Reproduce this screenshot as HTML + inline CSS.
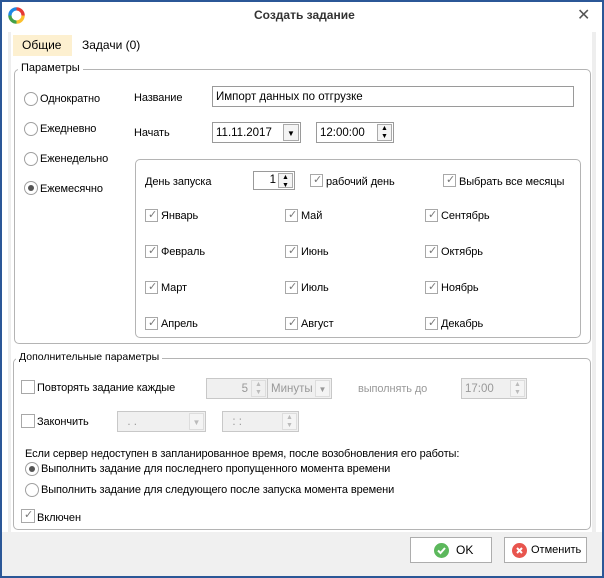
<!DOCTYPE html>
<html><head><meta charset="utf-8"><style>
*{margin:0;padding:0;box-sizing:border-box}
body{width:604px;height:578px;overflow:hidden;background:#2b5797;font-family:"Liberation Sans","DejaVu Sans",sans-serif;font-size:11px;color:#000}
#w{position:absolute;left:2px;top:2px;width:600px;height:574px;background:#fff}
.a{position:absolute;white-space:nowrap}
.t{margin-top:0;letter-spacing:-0.1px}
.grp{position:absolute;border:1px solid #b4b4b4;border-radius:5px}
.lg{position:absolute;background:#fff;padding:0 3px;white-space:nowrap;font-size:11px}
.rb{position:absolute;width:14px;height:14px;border:1px solid #a0a0a0;border-radius:50%;background:#fff}
.rb.on::after{content:"";position:absolute;left:3px;top:3px;width:6px;height:6px;border-radius:50%;background:#555}
.cb{position:absolute;width:13px;height:13px;border:1px solid #a8a8a8;background:#fff}
.cb.on::after{content:"✓";position:absolute;left:2px;top:-2px;font-size:11px;color:#777}
.in{position:absolute;border:1px solid #9a9a9a;background:#fff;padding-left:3px;line-height:20px;font-size:11.5px}
.dis{border-color:#c8c8c8;background:#f0f0f0;color:#999}
.sp{position:absolute;right:1px;top:1px;bottom:1px;width:15px;border:1px solid #aaa;background:#f4f4f4}
.btn{position:absolute;border:1px solid #adadad;background:#fff;height:26px}
</style></head><body><div id="w">
<svg class="a" style="left:6px;top:5px" width="17" height="17" viewBox="0 0 18 18"><path d="M9 2A7 7 0 0 1 16 9" stroke="#e53935" stroke-width="3.5" fill="none"/><path d="M16 9A7 7 0 0 1 9 16" stroke="#fbc02d" stroke-width="3.5" fill="none"/><path d="M9 16A7 7 0 0 1 2 9" stroke="#43a047" stroke-width="3.5" fill="none"/><path d="M2 9A7 7 0 0 1 9 2" stroke="#1e88e5" stroke-width="3.5" fill="none"/></svg>
<div class="a" style="left:252px;top:6px;font-weight:bold;color:#333;font-size:12px">Создать задание</div>
<div class="a" style="left:575px;top:3px;font-size:16px;color:#555">✕</div>
<div class="a" style="left:6px;top:30px;width:3px;height:500px;background:#eee"></div>
<div class="a" style="left:590px;top:30px;width:4px;height:500px;background:#eee"></div>
<div class="a" style="left:11px;top:33px;width:59px;height:21px;background:#fdf0d0"></div>
<div class="a" style="left:20px;top:36px;font-size:12px">Общие</div>
<div class="a" style="left:80px;top:36px;font-size:12px">Задачи (0)</div>

<div class="grp" style="left:12px;top:67px;width:577px;height:275px"></div>
<div class="lg" style="left:16px;top:60px">Параметры</div>
<div class="rb" style="left:22px;top:90px"></div><div class="a t" style="left:38px;top:91px">Однократно</div>
<div class="rb" style="left:22px;top:120px"></div><div class="a t" style="left:38px;top:121px">Ежедневно</div>
<div class="rb" style="left:22px;top:150px"></div><div class="a t" style="left:38px;top:151px">Еженедельно</div>
<div class="rb on" style="left:22px;top:179px"></div><div class="a t" style="left:38px;top:181px">Ежемесячно</div>
<div class="a t" style="left:132px;top:90px">Название</div>
<div class="in" style="left:210px;top:84px;width:362px;height:21px">Импорт данных по отгрузке</div>
<div class="a t" style="left:132px;top:125px">Начать</div>
<div class="in" style="left:210px;top:120px;width:89px;height:21px">11.11.2017<div class="sp" style="width:16px;font-size:8px;text-align:center;line-height:17px">▼</div></div>
<div class="in" style="left:314px;top:120px;width:78px;height:21px">12:00:00<div class="sp" style="font-size:7px;text-align:center;line-height:8px">▲<br>▼</div></div>
<div class="grp" style="left:133px;top:157px;width:446px;height:179px"></div>
<div class="a t" style="left:143px;top:174px">День запуска</div>
<div class="in" style="left:251px;top:169px;width:42px;height:19px;text-align:right;padding-right:18px;line-height:17px">1<div class="sp" style="font-size:7px;text-align:center;line-height:8px">▲<br>▼</div></div>
<div class="cb on" style="left:308px;top:172px"></div><div class="a t" style="left:324px;top:174px">рабочий день</div>
<div class="cb on" style="left:441px;top:172px"></div><div class="a t" style="left:457px;top:174px">Выбрать все месяцы</div>

<div class="cb on" style="left:143px;top:207px"></div><div class="a t" style="left:159px;top:208px">Январь</div>
<div class="cb on" style="left:143px;top:243px"></div><div class="a t" style="left:159px;top:244px">Февраль</div>
<div class="cb on" style="left:143px;top:279px"></div><div class="a t" style="left:159px;top:280px">Март</div>
<div class="cb on" style="left:143px;top:315px"></div><div class="a t" style="left:159px;top:316px">Апрель</div>
<div class="cb on" style="left:283px;top:207px"></div><div class="a t" style="left:299px;top:208px">Май</div>
<div class="cb on" style="left:283px;top:243px"></div><div class="a t" style="left:299px;top:244px">Июнь</div>
<div class="cb on" style="left:283px;top:279px"></div><div class="a t" style="left:299px;top:280px">Июль</div>
<div class="cb on" style="left:283px;top:315px"></div><div class="a t" style="left:299px;top:316px">Август</div>
<div class="cb on" style="left:423px;top:207px"></div><div class="a t" style="left:439px;top:208px">Сентябрь</div>
<div class="cb on" style="left:423px;top:243px"></div><div class="a t" style="left:439px;top:244px">Октябрь</div>
<div class="cb on" style="left:423px;top:279px"></div><div class="a t" style="left:439px;top:280px">Ноябрь</div>
<div class="cb on" style="left:423px;top:315px"></div><div class="a t" style="left:439px;top:316px">Декабрь</div>

<div class="grp" style="left:11px;top:356px;width:578px;height:172px"></div>
<div class="lg" style="left:14px;top:349px;font-size:10.5px">Дополнительные параметры</div>
<div class="cb" style="left:19px;top:378px;width:14px;height:14px"></div><div class="a t" style="left:35px;top:380px">Повторять задание каждые</div>
<div class="in dis" style="left:204px;top:376px;width:62px;height:21px;text-align:right;padding-right:19px">5<div class="sp" style="border-color:#ddd;background:#f0f0f0;font-size:7px;text-align:center;line-height:8px;color:#bbb">▲<br>▼</div></div>
<div class="in dis" style="left:265px;top:376px;width:65px;height:21px">Минуты<div class="sp" style="border-color:#ddd;font-size:8px;text-align:center;line-height:17px;color:#999">▼</div></div>
<div class="a t" style="left:356px;top:381px;color:#999">выполнять до</div>
<div class="in dis" style="left:459px;top:376px;width:66px;height:21px">17:00<div class="sp" style="border-color:#ddd;font-size:7px;text-align:center;line-height:8px;color:#bbb">▲<br>▼</div></div>
<div class="cb" style="left:19px;top:412px;width:14px;height:14px"></div><div class="a t" style="left:35px;top:414px">Закончить</div>
<div class="in dis" style="left:115px;top:409px;width:89px;height:21px">&nbsp;&nbsp;. .<div class="sp" style="border-color:#ddd;font-size:8px;text-align:center;line-height:17px;color:#bbb">▼</div></div>
<div class="in dis" style="left:220px;top:409px;width:77px;height:21px">&nbsp;&nbsp;: :<div class="sp" style="border-color:#ddd;font-size:7px;text-align:center;line-height:8px;color:#bbb">▲<br>▼</div></div>
<div class="a t" style="left:23px;top:446px">Если сервер недоступен в запланированное время, после возобновления его работы:</div>
<div class="rb on" style="left:23px;top:460px"></div><div class="a t" style="left:39px;top:461px">Выполнить задание для последнего пропущенного момента времени</div>
<div class="rb" style="left:23px;top:481px"></div><div class="a t" style="left:39px;top:482px">Выполнить задание для следующего после запуска момента времени</div>
<div class="cb on" style="left:19px;top:507px;width:14px;height:14px"></div><div class="a t" style="left:35px;top:510px">Включен</div>

<div class="a" style="left:0;top:530px;width:600px;height:44px;background:#f0f0f0"></div>
<div class="btn" style="left:408px;top:535px;width:82px"><svg class="a" style="left:23px;top:5px" width="15" height="15"><circle cx="7.5" cy="7.5" r="7.5" fill="#5cb85c"/><path d="M4 7.5l2.5 2.5 4.5-5" stroke="#fff" stroke-width="2" fill="none"/></svg><div class="a" style="left:45px;top:5px;font-size:12px">OK</div></div>
<div class="btn" style="left:502px;top:535px;width:83px"><svg class="a" style="left:7px;top:5px" width="15" height="15"><circle cx="7.5" cy="7.5" r="7.5" fill="#e8554e"/><path d="M5 5l5 5M10 5l-5 5" stroke="#fff" stroke-width="2"/></svg><div class="a" style="left:26px;top:6px">Отменить</div></div>
</div></body></html>
